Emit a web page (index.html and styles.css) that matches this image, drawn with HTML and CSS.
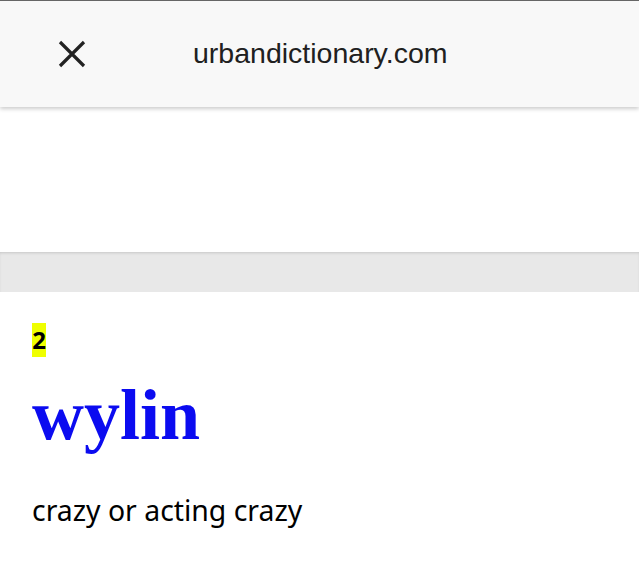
FILE: index.html
```html
<!DOCTYPE html>
<html lang="en">
<head>
    <meta charset="UTF-8">
    <title>wylin - Urban Dictionary</title>
    <link rel="stylesheet" href="styles.css">
</head>
<body>
    <!-- Custom tab toolbar -->
    <header class="tab-bar">
        <button class="close-btn" aria-label="Close">
            <svg width="28" height="28" viewBox="0 0 28 28">
                <path d="M2 2 L26 26 M26 2 L2 26" stroke="#222" stroke-width="3.2" fill="none"/>
            </svg>
        </button>
        <span class="tab-url">urbandictionary.com</span>
    </header>

    <div class="ad-slot"></div>
    <div class="divider-band"></div>

    <main class="definition">
        <div class="def-rank"><span class="rank-badge">2</span></div>
        <h1 class="def-word"><a href="#">wylin</a></h1>
        <p class="def-meaning">crazy or acting crazy</p>
    </main>
</body>
</html>
```

FILE: styles.css
```css
body {
    margin: 0;
    padding: 0;
    background: #fff;
    color: #000;
    font-family: 'Noto Sans', sans-serif;
}

/* Toolbar */
.tab-bar {
    height: 106px;
    border-top: 1px solid #666;
    background: #f8f8f8;
    box-shadow: 0 2px 4px rgba(0,0,0,0.2);
    display: flex;
    align-items: center;
    position: relative;
    z-index: 1;
}

.close-btn {
    background: none;
    border: 0;
    padding: 0;
    margin-left: 58px;
    width: 28px;
    height: 28px;
    display: flex;
}

.tab-url {
    margin-left: 107px;
    font-family: 'Liberation Sans', Arial, sans-serif;
    font-size: 28.5px;
    color: #202020;
    margin-top: -2px;
}

.ad-slot {
    height: 145px;
}

.divider-band {
    height: 40px;
    background: #e8e8e8;
    box-shadow: inset 0 2px 3px -1px rgba(0,0,0,0.15);
}

/* Definition card */
.definition {
    padding: 31px 32px 0;
}

.def-rank {
    line-height: 1;
}

.rank-badge {
    display: inline-block;
    background: #efff00;
    font-family: 'Open Sans', sans-serif;
    font-weight: bold;
    font-size: 24px;
    line-height: 34px;
    width: 14px;
    text-align: center;
}

.def-word {
    margin: 22px 0 0;
    font-family: 'Liberation Serif', serif;
    font-size: 72px;
    line-height: 1;
}

.def-word a {
    color: #0b0bf0;
    text-decoration: none;
}

.def-meaning {
    margin: 40px 0 0;
    font-size: 28.4px;
}
```
